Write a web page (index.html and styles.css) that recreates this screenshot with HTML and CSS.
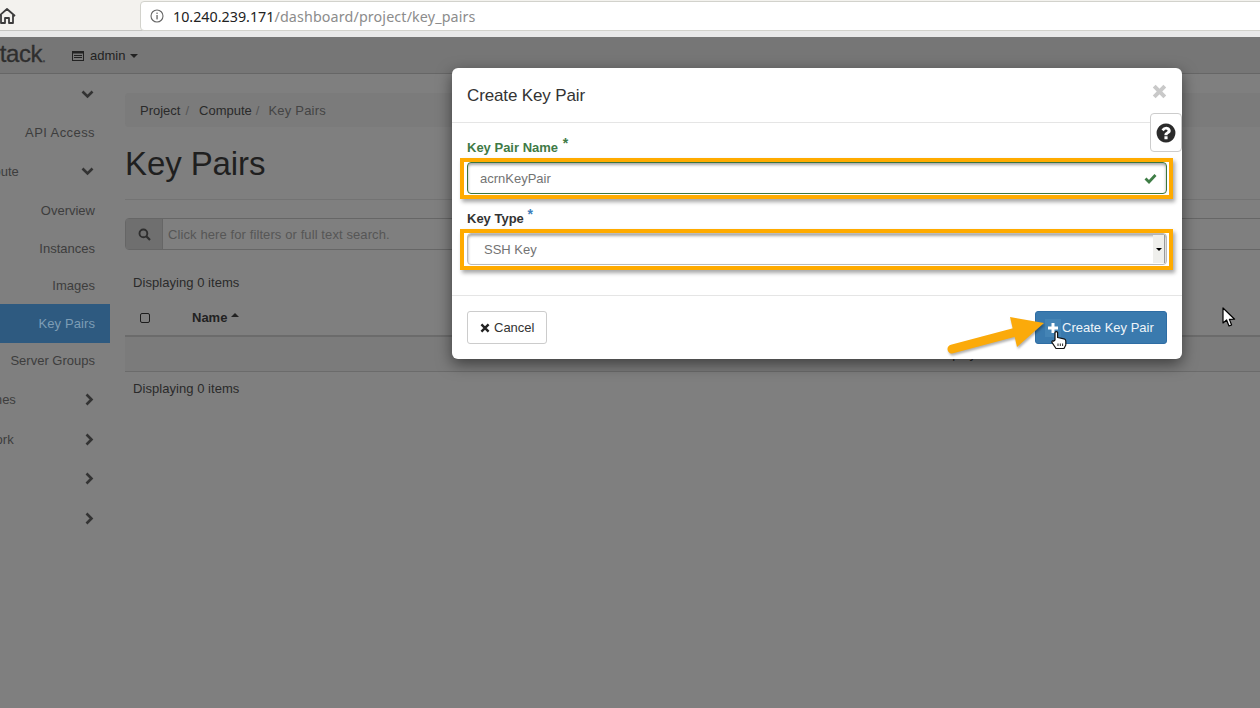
FILE: index.html
```html
<!DOCTYPE html>
<html lang="en">
<head>
<meta charset="utf-8">
<title>Key Pairs</title>
<link rel="stylesheet" href="styles.css">
</head>
<body>
<header class="chrome">
  <div class="chrome-top">
    <svg class="home" width="16" height="18" viewBox="0 0 16 18"><path d="M-1 9 L7 2 L15 9 M1 8 V16 H5 V11 H9 V16 H13 V8" fill="none" stroke="#3c3c3c" stroke-width="1.8" stroke-linejoin="round"/></svg>
    <div class="address">
      <svg class="info" width="16" height="16" viewBox="0 0 16 16"><circle cx="8" cy="8" r="6" fill="none" stroke="#666" stroke-width="1.1"/><rect x="7.4" y="7" width="1.3" height="4.4" fill="#666"/><rect x="7.4" y="4.6" width="1.3" height="1.3" fill="#666"/></svg>
      <span class="url"><span class="host">10.240.239.171</span><span class="path">/dashboard/project/key_pairs</span></span>
    </div>
  </div>
</header>
<nav class="navbar">
  <div class="brand"><span class="brand-text">openstack<span class="brand-dot">.</span></span></div>
  <div class="project">
    <svg width="12" height="10" viewBox="0 0 12 10"><rect x=".5" y=".5" width="11" height="9" fill="none" stroke="#222" stroke-width="1"/><path d="M.5 1h11v1.6H.5zM2 4h8v1H2zM2 6h8v1H2z" fill="#222"/></svg>
    <span>admin</span>
    <i class="caret"></i>
  </div>
</nav>
<div class="app">
  <aside class="sidebar">
    <div class="side-row"><svg class="chev-d" width="13" height="9" viewBox="0 0 13 9"><path d="M1.5 1.5 L6.5 6.5 L11.5 1.5" fill="none" stroke="#333" stroke-width="2.6"/></svg></div>
    <div class="side-row"><span class="wide">API Access</span></div>
    <div class="side-row group"><span class="clip">Compute</span><svg class="chev-d" width="13" height="9" viewBox="0 0 13 9"><path d="M1.5 1.5 L6.5 6.5 L11.5 1.5" fill="none" stroke="#333" stroke-width="2.6"/></svg></div>
    <div class="side-row"><span class="nudge">Overview</span></div>
    <div class="side-row"><span class="nudge">Instances</span></div>
    <div class="side-row"><span>Images</span></div>
    <div class="side-row active"><span>Key Pairs</span></div>
    <div class="side-row"><span>Server Groups</span></div>
    <div class="side-row group"><span class="clip nudge">Volumes</span><svg class="chev-r" width="9" height="13" viewBox="0 0 9 13"><path d="M1.5 1.5 L6.5 6.5 L1.5 11.5" fill="none" stroke="#333" stroke-width="2.6"/></svg></div>
    <div class="side-row group"><span class="clip nudge">Network</span><svg class="chev-r" width="9" height="13" viewBox="0 0 9 13"><path d="M1.5 1.5 L6.5 6.5 L1.5 11.5" fill="none" stroke="#333" stroke-width="2.6"/></svg></div>
    <div class="side-row"><svg class="chev-r" width="9" height="13" viewBox="0 0 9 13"><path d="M1.5 1.5 L6.5 6.5 L1.5 11.5" fill="none" stroke="#333" stroke-width="2.6"/></svg></div>
    <div class="side-row"><svg class="chev-r" width="9" height="13" viewBox="0 0 9 13"><path d="M1.5 1.5 L6.5 6.5 L1.5 11.5" fill="none" stroke="#333" stroke-width="2.6"/></svg></div>
  </aside>
  <main class="content">
    <ol class="breadcrumb">
      <li>Project</li><li class="sep">/</li><li>Compute</li><li class="sep">/</li><li class="current">Key Pairs</li>
    </ol>
    <h1 class="page-title">Key Pairs</h1>
    <div class="search">
      <div class="search-addon"><svg width="13" height="13" viewBox="0 0 13 13"><circle cx="5.4" cy="5.4" r="3.9" fill="none" stroke="#2e2e2e" stroke-width="1.9"/><path d="M8.3 8.3 L12 12" stroke="#2e2e2e" stroke-width="2.2"/></svg></div>
      <div class="search-input">Click here for filters or full text search.</div>
    </div>
    <p class="count first">Displaying 0 items</p>
    <div class="table-head">
      <i class="check"></i>
      <b class="col-name">Name</b>
      <i class="sort-up"></i>
    </div>
    <div class="table-row">No items to display.</div>
    <p class="count last">Displaying 0 items</p>
  </main>
</div>

<section class="modal">
  <div class="modal-header">
    <h2>Create Key Pair</h2>
    <svg class="close" width="15" height="15" viewBox="0 0 15 15"><path d="M2.2 2.2 L12.8 12.8 M12.8 2.2 L2.2 12.8" stroke="#c9c9c9" stroke-width="4"/></svg>
  </div>
  <div class="help">
    <svg width="22" height="22" viewBox="0 0 1792 1792"><path fill="#2b2b2b" d="M1024 1376v-192q0-14-9-23t-23-9h-192q-14 0-23 9t-9 23v192q0 14 9 23t23 9h192q14 0 23-9t9-23zm256-672q0-88-55.5-163t-138.5-116-170-41q-243 0-371 213-15 24 8 42l132 100q7 6 19 6 16 0 25-12 53-68 86-92 34-24 86-24 48 0 85.5 26t37.5 59q0 38-20 61t-68 45q-63 28-115.5 86.5t-52.5 125.5v36q0 14 9 23t23 9h192q14 0 23-9t9-23q0-19 21.5-49.5t54.5-49.5q32-18 49-28.5t46-35 44.5-48 28-60.5 12.5-81zm384 192q0 209-103 385.5t-279.5 279.5-385.5 103-385.5-103-279.5-279.5-103-385.5 103-385.5 279.5-279.5 385.5-103 385.5 103 279.5 279.5 103 385.5z"/></svg>
  </div>
  <div class="modal-body">
    <div class="label ok">Key Pair Name <sup class="star">*</sup></div>
    <div class="field hl ok-field">
      <span class="value">acrnKeyPair</span>
      <svg width="13" height="11" viewBox="0 0 13 11"><path d="M1.5 5.5 L5 9 L11.5 2" fill="none" stroke="#3f7d46" stroke-width="2.8"/></svg>
    </div>
    <div class="label second">Key Type <sup class="star blue">*</sup></div>
    <div class="field hl select-field">
      <span class="value">SSH Key</span>
      <span class="spin"><i class="spin-caret"></i></span>
    </div>
  </div>
  <div class="modal-footer">
    <button class="btn btn-default">
      <svg width="10" height="10" viewBox="0 0 10 10"><path d="M1.4 1.4 L8.6 8.6 M8.6 1.4 L1.4 8.6" stroke="#222" stroke-width="2.4"/></svg>
      <span>Cancel</span>
    </button>
    <button class="btn btn-primary">
      <span class="plus"><svg width="10" height="10" viewBox="0 0 10 10"><path d="M5 0 V10 M0 5 H10" stroke="#fff" stroke-width="3"/></svg></span>
      <span>Create Key Pair</span>
    </button>
  </div>
</section>

<svg class="arrow" width="110" height="45" viewBox="0 0 110 45"><path d="M8 35 L72 18" stroke="#fbaa0a" stroke-width="9" stroke-linecap="round"/><path d="M100 9 L66 3 L73 33 Z" fill="#fbaa0a"/></svg>
<svg class="hand" width="18" height="20" viewBox="0 0 18 20"><path d="M5 10 V2.4 Q6.3 0.8 7.6 2.4 V7.5 L14 8.8 Q15.8 9.5 15.8 11 V15 L14 18.5 H6 L1.8 12.2 Q2 10.4 3.6 11.2 Z" fill="#fff" stroke="#111" stroke-width="1.2" stroke-linejoin="round"/><path d="M8 13.5V16M10.3 13.5V16M12.6 13.5V16" stroke="#111" stroke-width=".9"/></svg>
<svg class="pointer" width="15" height="21" viewBox="0 0 15 21"><path d="M1 1 V16 L4.6 13 L7 19 L9.6 18 L7.4 12.4 L12.6 12.2 Z" fill="#fff" stroke="#000" stroke-width="1.2" stroke-linejoin="round"/></svg>
</body>
</html>
```
FILE: styles.css
```css
* { box-sizing: border-box; }
html, body { margin: 0; height: 100%; overflow: hidden; }
body {
  position: relative;
  width: 1260px;
  height: 708px;
  background: #7f7f7f;
  color: #2b2b2b;
  font-family: "Liberation Sans", Arial, sans-serif;
  font-size: 13px;
  line-height: 18px;
}
.chrome { height: 37px; background: #e9e9e9; }
.chrome-top {
  height: 31px;
  background: #f3f2ee;
  border-bottom: 1px solid #c5c5c2;
  display: flex;
  padding-left: 140px;
  position: relative;
}
.home { position: absolute; left: 0; top: 7px; }
.address {
  flex: 1;
  height: 30px;
  margin-top: 1px;
  margin-right: -8px;
  background: #fff;
  border: 1px solid #d2d2cc;
  border-radius: 4px;
  display: flex;
  align-items: center;
  padding-left: 8px;
  gap: 8px;
}
.url { font-family: "Noto Sans", sans-serif; font-size: 14.3px; color: #8c8c8c; padding-top: 2px; }
.host { color: #222; }
.path { letter-spacing: .13px; }

.navbar {
  height: 37px;
  background: #767676;
  border-bottom: 1px solid #666;
  display: flex;
  align-items: center;
  overflow: hidden;
}
.brand { width: 72px; flex: none; overflow: hidden; height: 36px; display: flex; align-items: center; justify-content: flex-end; padding-right: 26px; }
.brand-text { font-size: 24px; letter-spacing: -.4px; color: #2e2e2e; white-space: nowrap; flex: none; -webkit-text-stroke: .3px #2e2e2e; }
.brand-dot { font-size: 14px; color: #4a4a4a; letter-spacing: 0; }
.project { display: flex; align-items: center; gap: 6px; color: #222; padding-top: 2px; }
.caret { width: 0; height: 0; border: 4px solid transparent; border-top-color: #222; border-bottom: 0; margin-left: -1px; }

.app { display: flex; height: 635px; overflow: hidden; }
.sidebar {
  width: 110px;
  flex: none;
  padding-top: 1px;
  display: grid;
  grid-template-rows: 39px 38px 39px 38px 38px 37px 39px 36px 40px 40px 39px 40px;
  align-content: start;
  overflow: hidden;
  color: #3d3d3d;
}
.side-row { display: flex; align-items: center; justify-content: flex-end; padding-right: 15px; white-space: nowrap; }
.side-row.group { justify-content: space-between; }
.clip { margin-left: -34px; }
.nudge { padding-top: 2px; }
.wide { letter-spacing: .42px; }
.chev-d { margin-right: 1px; }
.chev-r { margin-right: 1px; }
.active { background: #2e5a80; color: #7d9db5; letter-spacing: .1px; }

.content { width: 1625px; flex: none; padding: 19px 15px 0; }
.breadcrumb {
  list-style: none;
  margin: 0;
  height: 34px;
  background: #7b7b7b;
  border-radius: 4px;
  padding: 2px 15px 0;
  display: flex;
  align-items: center;
  gap: 5px;
  color: #2a2a2a;
}
.sep { color: #555; margin-right: 5px; }
.sep + li + .sep { margin-right: 4px; margin-left: -1px; }
.current { color: #444; letter-spacing: .2px; }
.page-title {
  margin: 19px 0 0;
  padding-bottom: 17px;
  border-bottom: 1px solid #737373;
  font-size: 33px;
  line-height: 36px;
  font-weight: 400;
  letter-spacing: -.1px;
  color: #1f1f1f;
}
.search { margin-top: 18px; height: 32px; display: flex; border: 1px solid #666; border-radius: 4px; }
.search-addon { width: 37px; background: #6f6f6f; border-right: 1px solid #666; display: flex; align-items: center; justify-content: center; flex: none; }
.search-input { flex: 1; padding: 1px 0 0 5px; line-height: 30px; letter-spacing: .1px; color: #565656; background: #7f7f7f; }
.count { margin: 0; padding-left: 8px; color: #2a2a2a; letter-spacing: .05px; }
.first { margin-top: 24px; }
.last { margin-top: 8px; }
.table-head {
  margin-top: 8px;
  height: 37px;
  border-bottom: 2px solid #6b6b6b;
  display: flex;
  align-items: center;
  padding-left: 15px;
}
.check { width: 10px; height: 10px; border: 1.5px solid #1c1c1c; border-radius: 2px; flex: none; }
.col-name { margin-left: 42px; color: #222; }
.sort-up { width: 0; height: 0; border: 4px solid transparent; border-bottom-color: #222; border-top: 0; margin: -5px 0 0 4px; }
.table-row { height: 35px; background: #7b7b7b; border-bottom: 1px solid #6b6b6b; text-align: center; line-height: 34px; color: #2a2a2a; }

.modal {
  position: absolute;
  left: 452px;
  top: 68px;
  width: 730px;
  background: #fff;
  border-radius: 6px;
  box-shadow: 0 5px 15px rgba(0, 0, 0, .5);
  color: #333;
}
.modal-header {
  height: 55px;
  border-bottom: 1px solid #e5e5e5;
  display: flex;
  align-items: center;
  justify-content: space-between;
  padding: 0 15px;
}
.modal-header h2 { margin: 0; padding-top: 2px; font-size: 17px; font-weight: 400; letter-spacing: -.13px; color: #333; }
.close { margin-top: -7px; }
.help {
  position: absolute;
  right: 0;
  top: 45px;
  width: 32px;
  height: 39px;
  background: #fff;
  border: 1px solid #ccc;
  border-radius: 4px;
  display: flex;
  align-items: center;
  justify-content: center;
}
.modal-body { padding: 15px 15px 30px; }
.label { font-weight: 700; margin-bottom: 6px; height: 18px; line-height: 20px; }
.label.ok { color: #3f7a46; }
.label.second { margin-top: 15px; }
.star { color: #3f7a46; font-size: 14px; line-height: 0; vertical-align: 4px; margin-left: 1px; }
.star.blue { color: #3d7fbb; margin-left: 0; }
.field {
  position: relative;
  height: 32px;
  border: 1px solid #ccc;
  border-radius: 4px;
  display: flex;
  align-items: center;
  justify-content: space-between;
  box-shadow: inset 0 2px 3px rgba(0, 0, 0, .35);
  background: #fff;
}
.ok-field { border-color: #3c763d; padding: 0 9px 0 12px; }
.select-field { padding-left: 16px; padding-right: 1px; border-color: #bbb; }
.value { color: #737373; padding-top: 2px; }
.hl::after {
  content: "";
  position: absolute;
  inset: -5px -7px -6px -8px;
  border: 4px solid #ffab00;
  box-shadow: 2px 3px 4px rgba(0, 0, 0, .35);
  pointer-events: none;
}
.spin { width: 12px; height: 28px; background: #efefec; border-right: 1px solid #999; display: flex; align-items: center; justify-content: center; }
.spin-caret { width: 0; height: 0; border: 3px solid transparent; border-top: 3px solid #000; border-bottom: 0; }
.modal-footer {
  border-top: 1px solid #e5e5e5;
  padding: 15px;
  display: flex;
  justify-content: space-between;
}
.btn {
  height: 33px;
  border-radius: 3px;
  font: inherit;
  display: flex;
  align-items: center;
  padding: 0;
}
.btn-default { width: 80px; background: #fff; border: 1px solid #ccc; color: #333; gap: 4px; padding-left: 12px; }
.btn-primary { width: 132px; background: #3a7aae; border: 1px solid #2e6da4; color: #eef4f9; gap: 1px; padding-left: 9px; }
.plus { width: 16px; height: 18px; background: #4484b5; display: flex; align-items: center; justify-content: center; }

.arrow { position: absolute; left: 944px; top: 314px; filter: drop-shadow(1px 2px 1px rgba(0, 0, 0, .3)); }
.hand { position: absolute; left: 1050px; top: 330px; }
.pointer { position: absolute; left: 1222px; top: 307px; }
```
